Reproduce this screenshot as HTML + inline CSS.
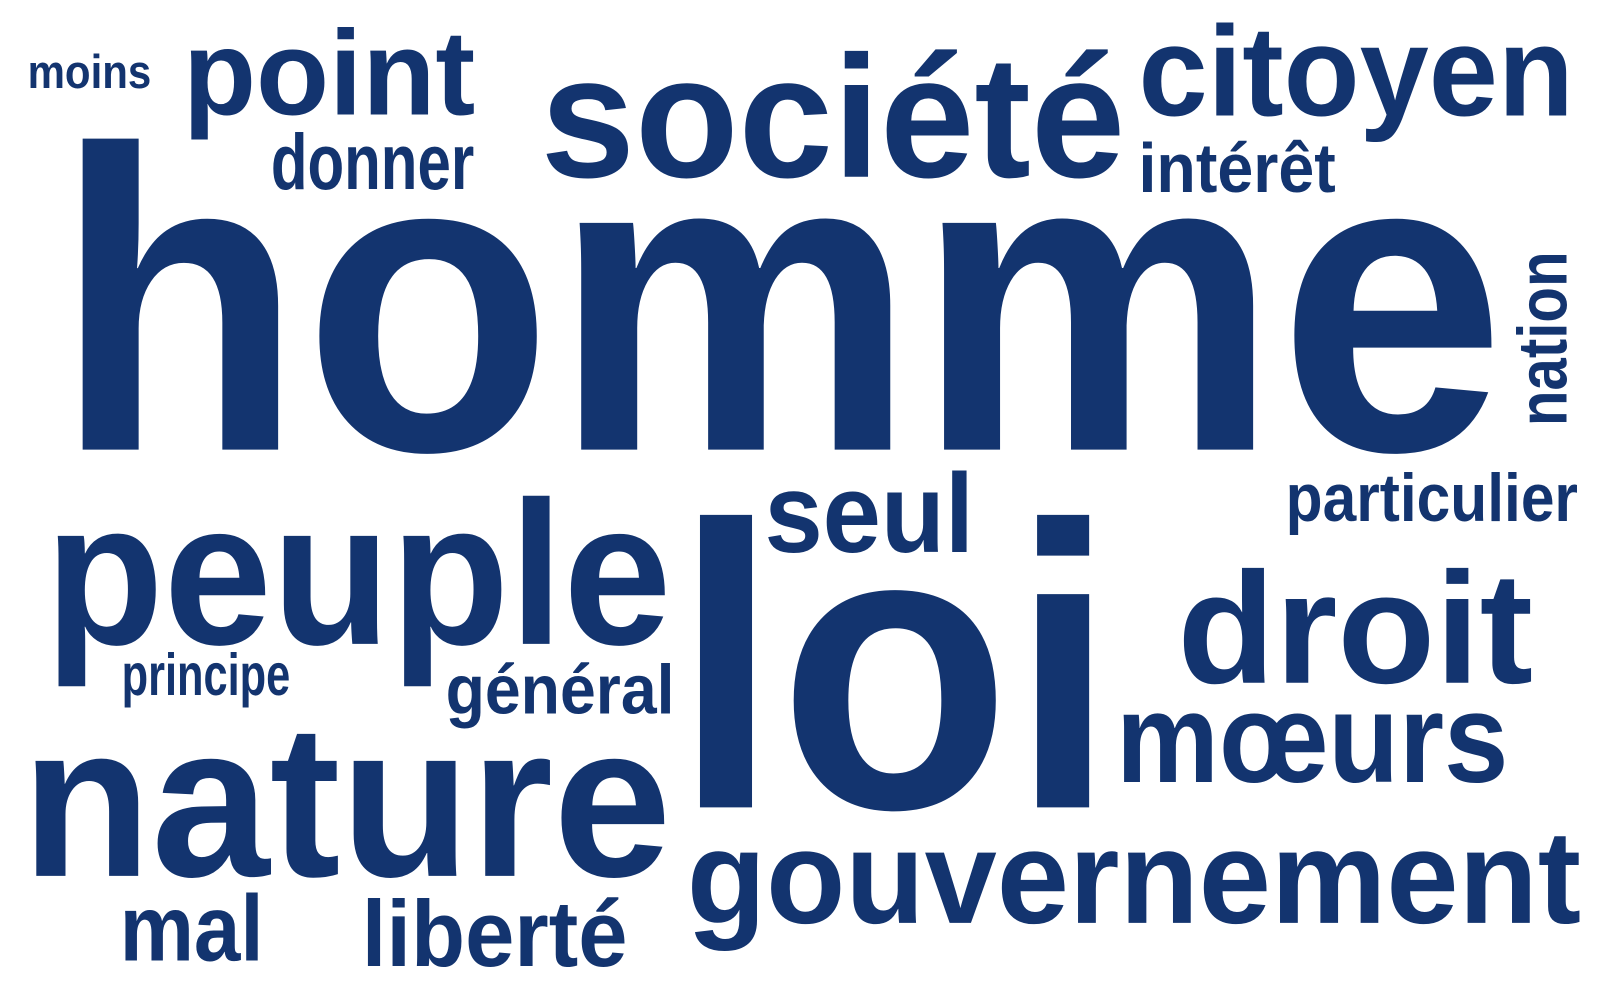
<!DOCTYPE html>
<html><head><meta charset="utf-8"><style>
html,body{margin:0;padding:0;background:#fff;width:1600px;height:1000px;overflow:hidden}
svg{display:block}
text{font-family:"Liberation Sans",sans-serif;font-weight:bold;fill:#13346f}
</style></head><body>
<svg width="1600" height="1000" viewBox="0 0 1600 1000" xmlns="http://www.w3.org/2000/svg">
<g transform="scale(1.022)">
<text x="27" y="86" font-size="46" textLength="121" lengthAdjust="spacingAndGlyphs">moins</text>
<text x="179" y="112" font-size="118" textLength="286" lengthAdjust="spacingAndGlyphs">point</text>
<text x="265" y="185" font-size="77" textLength="199" lengthAdjust="spacingAndGlyphs">donner</text>
<text x="529" y="173" font-size="170" textLength="572" lengthAdjust="spacingAndGlyphs">société</text>
<text x="1114" y="113" font-size="125" textLength="426" lengthAdjust="spacingAndGlyphs">citoyen</text>
<text x="1114" y="188" font-size="68" textLength="193" lengthAdjust="spacingAndGlyphs">intérêt</text>
<text x="53" y="440" font-size="420" textLength="1420" lengthAdjust="spacingAndGlyphs">homme</text>
<text transform="translate(1533,417) rotate(-90)" x="0" y="0" font-size="68" textLength="171" lengthAdjust="spacingAndGlyphs">nation</text>
<text x="1258" y="510" font-size="66" textLength="286" lengthAdjust="spacingAndGlyphs">particulier</text>
<text x="748" y="540" font-size="110" textLength="205" lengthAdjust="spacingAndGlyphs">seul</text>
<text x="44" y="630" font-size="200" textLength="613" lengthAdjust="spacingAndGlyphs">peuple</text>
<text x="659" y="790" font-size="395" textLength="433" lengthAdjust="spacingAndGlyphs">loi</text>
<text x="1152" y="668" font-size="155" textLength="348" lengthAdjust="spacingAndGlyphs">droit</text>
<text x="119" y="680" font-size="58" textLength="165" lengthAdjust="spacingAndGlyphs">principe</text>
<text x="436" y="698" font-size="68" textLength="224" lengthAdjust="spacingAndGlyphs">général</text>
<text x="1092" y="765" font-size="124" textLength="384" lengthAdjust="spacingAndGlyphs">mœurs</text>
<text x="21" y="857" font-size="213" textLength="636" lengthAdjust="spacingAndGlyphs">nature</text>
<text x="672" y="903" font-size="130" textLength="875" lengthAdjust="spacingAndGlyphs">gouvernement</text>
<text x="117" y="940" font-size="92" textLength="141" lengthAdjust="spacingAndGlyphs">mal</text>
<text x="354" y="945" font-size="92" textLength="260" lengthAdjust="spacingAndGlyphs">liberté</text>
</g>
</svg>
</body></html>
